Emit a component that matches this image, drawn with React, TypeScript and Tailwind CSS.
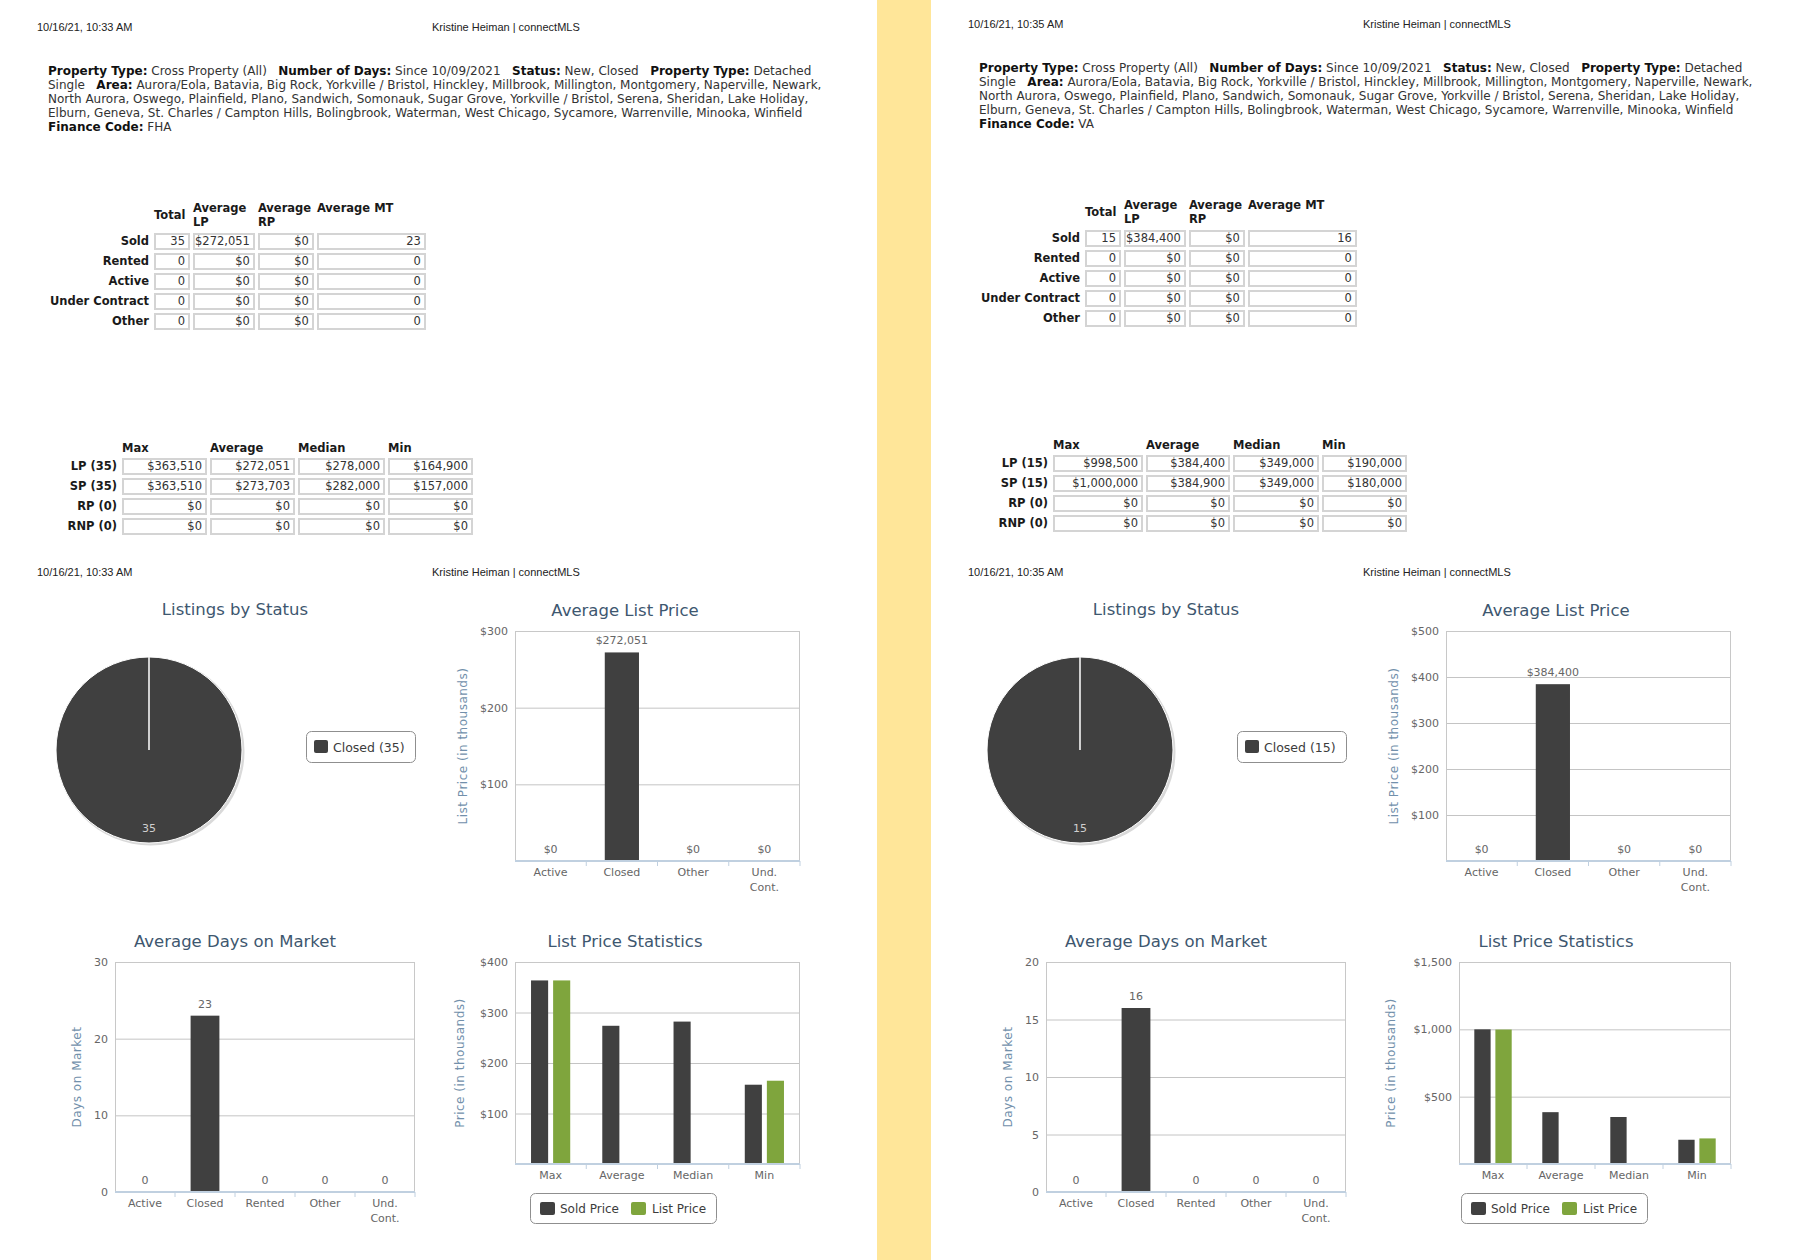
type Row = { label: string; cells: string[] }

type Series = { color: string; values: number[] }

type PageData = {
  date: string
  finance: string
  summary: Row[]
  stats: Row[]
  statCols: string[]
  count: number
  avgList: { max: number; ticks: number[]; values: number[]; labels: string[] }
  days: { max: number; ticks: number[]; values: number[] }
  priceStats: { max: number; ticks: number[]; left: number; sold: number[]; list: number[] }
}

const DARK = '#404040'
const GREEN = '#7fa53d'

const zeroRow = (label: string, n: number, money: boolean[]) => ({
  label,
  cells: Array.from({ length: n }, (_, i) => (money[i] ? '$0' : '0')),
})

const money = (v: number) => '$' + v.toLocaleString('en-US')

const pages: PageData[] = [
  {
    date: '10/16/21, 10:33 AM',
    finance: 'FHA',
    summary: [
      { label: 'Sold', cells: ['35', '$272,051', '$0', '23'] },
      zeroRow('Rented', 4, [false, true, true, false]),
      zeroRow('Active', 4, [false, true, true, false]),
      zeroRow('Under Contract', 4, [false, true, true, false]),
      zeroRow('Other', 4, [false, true, true, false]),
    ],
    stats: [
      { label: 'LP (35)', cells: ['$363,510', '$272,051', '$278,000', '$164,900'] },
      { label: 'SP (35)', cells: ['$363,510', '$273,703', '$282,000', '$157,000'] },
      zeroRow('RP (0)', 4, [true, true, true, true]),
      zeroRow('RNP (0)', 4, [true, true, true, true]),
    ],
    statCols: ['w-[85px]', 'w-[85px]', 'w-[87px]', 'w-[85px]'],
    count: 35,
    avgList: { max: 300, ticks: [100, 200, 300], values: [0, 272.051, 0, 0], labels: ['$0', '$272,051', '$0', '$0'] },
    days: { max: 30, ticks: [0, 10, 20, 30], values: [0, 23, 0, 0, 0] },
    priceStats: {
      max: 400,
      ticks: [100, 200, 300, 400],
      left: 85,
      sold: [363.51, 273.703, 282, 157],
      list: [363.51, 0, 0, 164.9],
    },
  },
  {
    date: '10/16/21, 10:35 AM',
    finance: 'VA',
    summary: [
      { label: 'Sold', cells: ['15', '$384,400', '$0', '16'] },
      zeroRow('Rented', 4, [false, true, true, false]),
      zeroRow('Active', 4, [false, true, true, false]),
      zeroRow('Under Contract', 4, [false, true, true, false]),
      zeroRow('Other', 4, [false, true, true, false]),
    ],
    stats: [
      { label: 'LP (15)', cells: ['$998,500', '$384,400', '$349,000', '$190,000'] },
      { label: 'SP (15)', cells: ['$1,000,000', '$384,900', '$349,000', '$180,000'] },
      zeroRow('RP (0)', 4, [true, true, true, true]),
      zeroRow('RNP (0)', 4, [true, true, true, true]),
    ],
    statCols: ['w-[90px]', 'w-[84px]', 'w-[86px]', 'w-[85px]'],
    count: 15,
    avgList: { max: 500, ticks: [100, 200, 300, 400, 500], values: [0, 384.4, 0, 0], labels: ['$0', '$384,400', '$0', '$0'] },
    days: { max: 20, ticks: [0, 5, 10, 15, 20], values: [0, 16, 0, 0, 0] },
    priceStats: {
      max: 1500,
      ticks: [500, 1000, 1500],
      left: 98,
      sold: [1000, 384.9, 349, 180],
      list: [998.5, 0, 0, 190],
    },
  },
]

function Header({ date }: { date: string }) {
  return (
    <div className="flex h-[14px] items-center pl-[37px] font-['Liberation_Sans',Arial,sans-serif] text-[11px] leading-[14px] text-[#222]">
      <span className="w-[395px]">{date}</span>
      <span>Kristine Heiman | connectMLS</span>
    </div>
  )
}

function Criteria({ finance }: { finance: string }) {
  return (
    <div className="mt-[30px] pl-[48px] font-['DejaVu_Sans',Verdana,sans-serif] text-[12px] leading-[14px] whitespace-nowrap text-[#333] [&_b]:text-[#111]">
      <div>
        <b>Property Type:</b> Cross Property (All)&nbsp;&nbsp; <b>Number of Days:</b> Since 10/09/2021&nbsp;&nbsp;{' '}
        <b>Status:</b> New, Closed&nbsp;&nbsp; <b>Property Type:</b> Detached
      </div>
      <div>
        Single&nbsp;&nbsp; <b>Area:</b> Aurora/Eola, Batavia, Big Rock, Yorkville / Bristol, Hinckley, Millbrook,
        Millington, Montgomery, Naperville, Newark,
      </div>
      <div>
        North Aurora, Oswego, Plainfield, Plano, Sandwich, Somonauk, Sugar Grove, Yorkville / Bristol, Serena, Sheridan,
        Lake Holiday,
      </div>
      <div>
        Elburn, Geneva, St. Charles / Campton Hills, Bolingbrook, Waterman, West Chicago, Sycamore, Warrenville, Minooka,
        Winfield
      </div>
      <div>
        <b>Finance Code:</b> {finance}
      </div>
    </div>
  )
}

const cell =
  'h-[17px] border-2 border-[#d4d4d4] p-0 pr-[3px] text-right align-middle text-[11.5px] font-normal leading-[13px] text-[#333]'
const rowHead = 'h-[17px] p-0 pr-[2px] text-right align-middle text-[11.5px] font-bold leading-[13px] text-[#1a1a1a]'

function SummaryTable({ rows }: { rows: Row[] }) {
  return (
    <table className="mt-[62px] ml-[46px] border-separate border-spacing-[3px] font-['DejaVu_Sans',Verdana,sans-serif]">
      <thead>
        <tr className="text-left text-[11.5px] leading-[14px] font-bold text-[#1a1a1a]">
          <th className="h-[31px] w-[102px] p-0" />
          <th className="w-[36px] p-0 align-middle">Total</th>
          <th className="w-[61px] p-0 pt-[2px] align-top">
            Average
            <br />
            LP
          </th>
          <th className="w-[56px] p-0 pt-[2px] align-top">
            Average
            <br />
            RP
          </th>
          <th className="w-[109px] p-0 pt-[2px] align-top">Average MT</th>
        </tr>
      </thead>
      <tbody>
        {rows.map((r) => (
          <tr key={r.label}>
            <th className={rowHead}>{r.label}</th>
            {r.cells.map((c, i) => (
              <td key={i} className={cell}>
                {c}
              </td>
            ))}
          </tr>
        ))}
      </tbody>
    </table>
  )
}

function StatsTable({ rows, cols }: { rows: Row[]; cols: string[] }) {
  const heads = ['Max', 'Average', 'Median', 'Min']
  return (
    <table className="mt-[104px] ml-[46px] border-separate border-spacing-[3px] font-['DejaVu_Sans',Verdana,sans-serif]">
      <thead>
        <tr className="text-left text-[11.5px] leading-[14px] font-bold text-[#1a1a1a]">
          <th className="h-[15px] w-[70px] p-0" />
          {heads.map((h, i) => (
            <th key={h} className={`${cols[i]} p-0 align-bottom`}>
              {h}
            </th>
          ))}
        </tr>
      </thead>
      <tbody>
        {rows.map((r) => (
          <tr key={r.label}>
            <th className={rowHead}>{r.label}</th>
            {r.cells.map((c, i) => (
              <td key={i} className={cell}>
                {c}
              </td>
            ))}
          </tr>
        ))}
      </tbody>
    </table>
  )
}

const W = 390
const H = 330

function Title({ children, y }: { children: string; y: number }) {
  return (
    <text x={W / 2} y={y} textAnchor="middle" fontSize={16.5} fill="#3e576f">
      {children}
    </text>
  )
}

function PieChart({ count }: { count: number }) {
  const cx = 109
  const cy = 158
  const r = 93
  return (
    <svg width={W} height={H} className="block font-['DejaVu_Sans',Verdana,sans-serif]">
      <Title y={23}>Listings by Status</Title>
      <circle cx={cx + 1.5} cy={cy + 1.5} r={r + 1} fill="#d9d9d9" />
      <circle cx={cx} cy={cy} r={r} fill={DARK} stroke="#fff" strokeWidth={1} />
      <line x1={cx} y1={cy - r} x2={cx} y2={cy} stroke="#f4f4f4" strokeWidth={1.6} />
      <text x={cx} y={240} textAnchor="middle" fontSize={11} fill="#cfcfcf">
        {count}
      </text>
      <rect x={266.5} y={139.5} width={109} height={31} rx={5} fill="#fff" stroke="#8f8f8f" />
      <rect x={274} y={148} width={14} height={13} rx={2} fill={DARK} />
      <text x={293} y={159.5} fontSize={12.5} fill="#3c3c3c">
        Closed ({count})
      </text>
    </svg>
  )
}

type BarChartProps = {
  title: string
  l: number
  t: number
  r: number
  b: number
  max: number
  ticks: number[]
  tickLabel: (v: number) => string
  axisTitle: string
  axisX: number
  cats: string[][]
  series: Series[]
  labels?: string[]
  legend?: boolean
}

function BarChart({ title, l, t, r, b, max, ticks, tickLabel, axisTitle, axisX, cats, series, labels, legend }: BarChartProps) {
  const catW = (r - l) / cats.length
  const y = (v: number) => b - (v / max) * (b - t)
  const bars = series.flatMap((s, si) =>
    s.values.map((v, ci) => {
      const x0 = l + ci * catW
      const w = series.length === 1 ? catW * 0.48 : catW * 0.24
      const x = series.length === 1 ? x0 + (catW - w) / 2 : x0 + (si === 0 ? 0.225 : 0.535) * catW
      if (v <= 0) return null
      return <rect key={`${si}-${ci}`} x={x} y={y(v)} width={w} height={b - y(v)} fill={s.color} />
    }),
  )
  return (
    <svg width={W} height={H} className="block font-['DejaVu_Sans',Verdana,sans-serif]">
      <Title y={t - 15.5}>{title}</Title>
      {ticks
        .filter((v) => v > 0)
        .map((v) => (
          <line key={v} x1={l} x2={r} y1={y(v) + 0.5} y2={y(v) + 0.5} stroke="#c4c4c4" />
        ))}
      <rect x={l + 0.5} y={t + 0.5} width={r - l - 1} height={b - t} fill="none" stroke="#c8c8c8" />
      {ticks.map((v) => (
        <text key={v} x={l - 7} y={y(v) + 4} textAnchor="end" fontSize={11} fill="#666">
          {tickLabel(v)}
        </text>
      ))}
      <text
        x={axisX}
        y={(t + b) / 2}
        transform={`rotate(-90 ${axisX} ${(t + b) / 2})`}
        textAnchor="middle"
        dominantBaseline="central"
        fontSize={12}
        letterSpacing={0.5}
        fill="#7290ab"
      >
        {axisTitle}
      </text>
      {bars}
      <line x1={l} x2={r} y1={b} y2={b} stroke="#c0d0e0" strokeWidth={2} />
      {cats.map((_, i) => (
        <line key={i} x1={l + (i + 1) * catW} x2={l + (i + 1) * catW} y1={b} y2={b + 5} stroke="#c0d0e0" />
      ))}
      {cats.map((lines, i) => (
        <text key={i} x={l + (i + 0.5) * catW} y={b + 15} textAnchor="middle" fontSize={11} fill="#666">
          {lines.map((ln, j) => (
            <tspan key={j} x={l + (i + 0.5) * catW} dy={j === 0 ? 0 : 15}>
              {ln}
            </tspan>
          ))}
        </text>
      ))}
      {labels &&
        labels.map((lb, i) => (
          <text key={i} x={l + (i + 0.5) * catW} y={y(series[0].values[i]) - 8} textAnchor="middle" fontSize={11} fill="#666">
            {lb}
          </text>
        ))}
      {legend && (
        <g>
          <rect x={100.5} y={b + 29.5} width={186} height={30} rx={5} fill="#fff" stroke="#8f8f8f" />
          <rect x={110} y={b + 38} width={15} height={13} rx={2} fill={DARK} />
          <text x={130} y={b + 49} fontSize={12} fill="#3c3c3c">
            Sold Price
          </text>
          <rect x={201} y={b + 38} width={15} height={13} rx={2} fill={GREEN} />
          <text x={222} y={b + 49} fontSize={12} fill="#3c3c3c">
            List Price
          </text>
        </g>
      )}
    </svg>
  )
}

function Page({ d, right }: { d: PageData; right?: boolean }) {
  return (
    <div className="flex h-full flex-col">
      <div className={`h-[545px] ${right ? 'pt-[17px]' : 'pt-[20px]'}`}>
        <Header date={d.date} />
        <Criteria finance={d.finance} />
        <SummaryTable rows={d.summary} />
        <StatsTable rows={d.stats} cols={d.statCols} />
      </div>
      <div className="mt-[20px]">
        <Header date={d.date} />
      </div>
      <div className="mt-[13px] ml-[40px] grid grid-cols-[390px_390px] grid-rows-[330px_330px]">
        <PieChart count={d.count} />
        <BarChart
          title="Average List Price"
          l={85}
          t={39}
          r={370}
          b={269}
          max={d.avgList.max}
          ticks={d.avgList.ticks}
          tickLabel={(v) => money(v)}
          axisTitle="List Price (in thousands)"
          axisX={33}
          cats={[['Active'], ['Closed'], ['Other'], ['Und.', 'Cont.']]}
          series={[{ color: DARK, values: d.avgList.values }]}
          labels={d.avgList.labels}
        />
        <BarChart
          title="Average Days on Market"
          l={75}
          t={40}
          r={375}
          b={270}
          max={d.days.max}
          ticks={d.days.ticks}
          tickLabel={(v) => String(v)}
          axisTitle="Days on Market"
          axisX={37}
          cats={[['Active'], ['Closed'], ['Rented'], ['Other'], ['Und.', 'Cont.']]}
          series={[{ color: DARK, values: d.days.values }]}
          labels={d.days.values.map(String)}
        />
        <BarChart
          title="List Price Statistics"
          l={d.priceStats.left}
          t={40}
          r={370}
          b={242}
          max={d.priceStats.max}
          ticks={d.priceStats.ticks}
          tickLabel={(v) => money(v)}
          axisTitle="Price (in thousands)"
          axisX={30}
          cats={[['Max'], ['Average'], ['Median'], ['Min']]}
          series={[
            { color: DARK, values: d.priceStats.sold },
            { color: GREEN, values: d.priceStats.list },
          ]}
          legend
        />
      </div>
    </div>
  )
}

export default function App() {
  return (
    <div className="flex h-[1260px] w-[1800px] overflow-hidden bg-white">
      <div className="w-[877px] shrink-0">
        <Page d={pages[0]} />
      </div>
      <div className="w-[54px] shrink-0 bg-[#ffe699]" />
      <div className="w-[869px] shrink-0">
        <Page d={pages[1]} right />
      </div>
    </div>
  )
}
